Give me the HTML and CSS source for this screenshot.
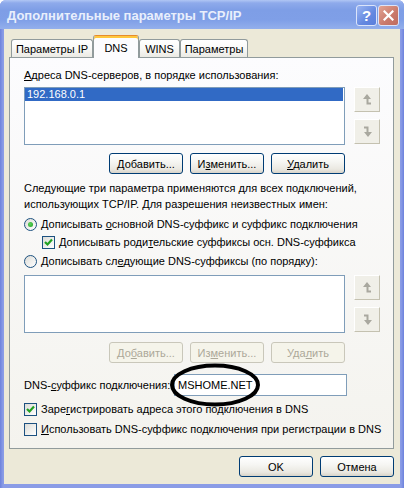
FILE: index.html
```html
<!DOCTYPE html>
<html lang="ru">
<head>
  <meta charset="UTF-8" />
  <title>Дополнительные параметры TCP/IP</title>
  <link rel="stylesheet" href="styles.css">
</head>
<body>
<div class="window">
  <div class="titlebar">
    <span class="title">Дополнительные параметры TCP/IP</span>
    <div class="caption">
      <span class="cap-btn cap-help">?</span>
      <span class="cap-btn cap-close">
        <svg width="11" height="11" viewBox="0 0 11 11"><path d="M1.5 1.5 L9.5 9.5 M9.5 1.5 L1.5 9.5" stroke="#fff" stroke-width="2.2" stroke-linecap="square"/></svg>
      </span>
    </div>
  </div>

  <div class="client">
    <div class="tabs">
      <span class="tab tab-ip">Параметры IP</span>
      <span class="tab tab-active tab-dns">DNS</span>
      <span class="tab tab-wins">WINS</span>
      <span class="tab tab-opts">Параметры</span>
    </div>

    <div class="panel">
      <div class="label"><u>А</u>дреса DNS-серверов, в порядке использования:</div>

      <div class="list-row">
        <div class="listbox">
          <div class="item selected">192.168.0.1</div>
        </div>
        <div class="arrows">
          <span class="arrow-btn">
            <svg width="9" height="11" viewBox="0 0 9 11"><path d="M4 0 L8 5 L5.5 5 L5.5 8.5 L8 8.5 L8 10.5 L3.5 10.5 L3.5 5 L0 5 Z" fill="#a9a89f"/></svg>
          </span>
          <span class="arrow-btn">
            <svg width="9" height="11" viewBox="0 0 9 11"><path d="M5 11 L1 6 L3.5 6 L3.5 2.5 L1 2.5 L1 0.5 L5.5 0.5 L5.5 6 L9 6 Z" fill="#a9a89f"/></svg>
          </span>
        </div>
      </div>

      <div class="btn-row">
        <button class="btn"><u>Д</u>обавить...</button>
        <button class="btn">И<u>з</u>менить...</button>
        <button class="btn"><u>У</u>далить</button>
      </div>

      <p class="note">Следующие три параметра применяются для всех подключений,<br>использующих TCP/IP. Для разрешения неизвестных имен:</p>

      <div class="option opt-first"><span class="radio checked"></span><span>Дописывать <u>о</u>сновной DNS-суффикс и суффикс подключения</span></div>
      <div class="option opt-sub"><span class="check">
        <svg width="11" height="11" viewBox="0 0 11 11"><path d="M2 5 L4.5 7.5 L9 2.5" fill="none" stroke="#21a121" stroke-width="2.2"/></svg>
      </span><span>Дописывать роди<u>т</u>ельские суффиксы осн. DNS-суффикса</span></div>
      <div class="option opt-third"><span class="radio"></span><span>Дописывать сл<u>е</u>дующие DNS-суффиксы (по порядку):</span></div>

      <div class="list-row list-second">
        <div class="listbox"></div>
        <div class="arrows">
          <span class="arrow-btn">
            <svg width="9" height="11" viewBox="0 0 9 11"><path d="M4 0 L8 5 L5.5 5 L5.5 8.5 L8 8.5 L8 10.5 L3.5 10.5 L3.5 5 L0 5 Z" fill="#a9a89f"/></svg>
          </span>
          <span class="arrow-btn">
            <svg width="9" height="11" viewBox="0 0 9 11"><path d="M5 11 L1 6 L3.5 6 L3.5 2.5 L1 2.5 L1 0.5 L5.5 0.5 L5.5 6 L9 6 Z" fill="#a9a89f"/></svg>
          </span>
        </div>
      </div>

      <div class="btn-row btn-row-second">
        <button class="btn" disabled>До<u>б</u>авить...</button>
        <button class="btn" disabled>Из<u>м</u>енить...</button>
        <button class="btn" disabled>Уда<u>л</u>ить</button>
      </div>

      <div class="suffix-row">
        <span class="suffix-label">DNS-<u>с</u>уффикс подключения:</span>
        <div class="field">MSHOME.NET</div>
        <svg class="mark" width="92" height="46" viewBox="0 0 92 46"><ellipse cx="45" cy="22" rx="43" ry="19.5" fill="none" stroke="#000" stroke-width="4"/></svg>
      </div>

      <div class="option opt-reg"><span class="check">
        <svg width="11" height="11" viewBox="0 0 11 11"><path d="M2 5 L4.5 7.5 L9 2.5" fill="none" stroke="#21a121" stroke-width="2.2"/></svg>
      </span><span>Заре<u>г</u>истрировать адреса этого подключения в DNS</span></div>
      <div class="option opt-use"><span class="check"></span><span><u>И</u>спользовать DNS-суффикс подключения при регистрации в DNS</span></div>
    </div>

    <div class="footer">
      <button class="btn">OK</button>
      <button class="btn">Отмена</button>
    </div>
  </div>
</div>
</body>
</html>
```

FILE: styles.css
```css
* {
  box-sizing: border-box;
}
body {
  margin: 0;
  background: #fff;
  font-family: "Liberation Sans", Arial, sans-serif;
  font-size: 11px;
  color: #000;
}
.window {
  width: 404px;
  height: 488px;
  display: flex;
  flex-direction: column;
  background: linear-gradient(90deg, #6d82dc, #8a9ce6 3px, #8a9ce6 401px, #6d82dc);
  border-radius: 6px 6px 0 0;
  overflow: hidden;
}
.titlebar {
  height: 29px;
  flex: none;
  display: flex;
  justify-content: space-between;
  align-items: flex-start;
  padding: 5px 5px 0 7px;
  background: linear-gradient(#b0c6f4 0, #8eaaeb 3px, #7e9ee6 10px, #7f9fe7 20px, #93afec 29px);
}
.title {
  font-size: 13px;
  font-weight: bold;
  line-height: 21px;
  color: #e9effc;
}
.caption {
  display: flex;
  gap: 1px;
}
.cap-btn {
  width: 21px;
  height: 21px;
  border: 1px solid #dbe4fa;
  border-radius: 3px;
  display: flex;
  align-items: center;
  justify-content: center;
  color: #fff;
  font-size: 15px;
  font-weight: bold;
}
.cap-help {
  background: linear-gradient(135deg, #9ab5f2, #6488e0 60%, #5a7edc);
}
.cap-close {
  background: linear-gradient(135deg, #e2a393, #c9796b 60%, #bf6b5e);
}

.client {
  flex: 1;
  margin: 0 4px 4px;
  background: #ece9d8;
  display: flex;
  flex-direction: column;
}
.tabs {
  display: flex;
  align-items: flex-end;
  height: 22px;
  margin: 6px 0 0 7px;
}
.tab {
  height: 18px;
  border: 1px solid #919b9c;
  border-bottom: none;
  border-radius: 3px 3px 0 0;
  background: linear-gradient(#ffffff, #fafaf8 45%, #ebeae4);
  display: flex;
  align-items: center;
  justify-content: center;
}
.tab-ip { width: 82px; }
.tab-dns { width: 46px; }
.tab-wins { width: 41px; }
.tab-opts { width: 68px; }
.tab-active {
  height: 23px;
  margin-bottom: -1px;
  position: relative;
  z-index: 1;
  border-top: 1px solid #e68b2c;
  box-shadow: inset 0 2px #ffc73c;
  background: #fcfcfe;
  padding-top: 1px;
}

.panel {
  width: 385px;
  height: 392px;
  margin-left: 5px;
  border: 1px solid #919b9c;
  background: linear-gradient(#fcfcfe, #f4f3ee);
  padding: 11px 0 0 14px;
  display: flex;
  flex-direction: column;
}
.label {
  line-height: 13px;
}
.list-row {
  display: flex;
  margin-top: 5px;
}
.list-second {
  margin-top: 6px;
}
.listbox {
  width: 321px;
  height: 58px;
  border: 1px solid #7f9db9;
  background: #fff;
}
.item {
  height: 13px;
  line-height: 13px;
  padding-left: 2px;
}
.item.selected {
  background: #316ac5;
  color: #fff;
  margin-right: 1px;
}
.arrows {
  display: flex;
  flex-direction: column;
  gap: 7px;
  margin-left: 9px;
}
.arrow-btn {
  width: 26px;
  height: 25px;
  border: 1px solid;
  border-color: #ffffff #c4c1b0 #c4c1b0 #ffffff;
  background: #f0efe8;
  display: flex;
  align-items: center;
  justify-content: center;
}

.btn-row {
  width: 321px;
  display: flex;
  justify-content: flex-end;
  gap: 7px;
  margin-top: 8px;
}
.btn-row-second {
  margin-top: 9px;
}
.btn {
  width: 74px;
  height: 21px;
  padding: 0;
  font-family: inherit;
  font-size: 11px;
  color: #000;
  border: 1px solid #003c74;
  border-radius: 3px;
  background: linear-gradient(#ffffff, #f6f6f3 40%, #eae8e1 80%, #d8d3c8);
}
.btn:disabled {
  color: #aca899;
  border-color: #c9c7ba;
  background: #f5f4ea;
}

.note {
  margin: 6px 0 0;
  line-height: 16px;
}
.option {
  display: flex;
  align-items: center;
  height: 16px;
  gap: 4px;
}
.opt-first { margin-top: 4px; }
.opt-sub { margin-top: 2px; margin-left: 18px; }
.opt-third { margin-top: 3px; }
.opt-reg { margin-top: 5px; }
.opt-use { margin-top: 4px; }

.radio {
  width: 13px;
  height: 13px;
  border: 1px solid #1c5180;
  border-radius: 50%;
  background: linear-gradient(135deg, #dcdcd7, #ffffff);
  display: flex;
  align-items: center;
  justify-content: center;
  flex: none;
}
.radio.checked::after {
  content: "";
  width: 5px;
  height: 5px;
  border-radius: 50%;
  background: radial-gradient(circle at 40% 40%, #5ed35e, #21a121);
}
.check {
  width: 13px;
  height: 13px;
  border: 1px solid #1c5180;
  background: linear-gradient(135deg, #dcdcd7, #ffffff);
  display: flex;
  align-items: center;
  justify-content: center;
  flex: none;
}

.suffix-row {
  position: relative;
  display: flex;
  align-items: center;
  margin-top: 11px;
  height: 22px;
}
.suffix-label {
  width: 150px;
}
.field {
  width: 173px;
  height: 22px;
  border: 1px solid #7f9db9;
  background: #fff;
  line-height: 20px;
  padding-left: 3px;
}
.mark {
  position: absolute;
  left: 146px;
  top: -11px;
}

.footer {
  display: flex;
  justify-content: flex-end;
  gap: 7px;
  margin-top: 7px;
  padding-right: 6px;
}
```
